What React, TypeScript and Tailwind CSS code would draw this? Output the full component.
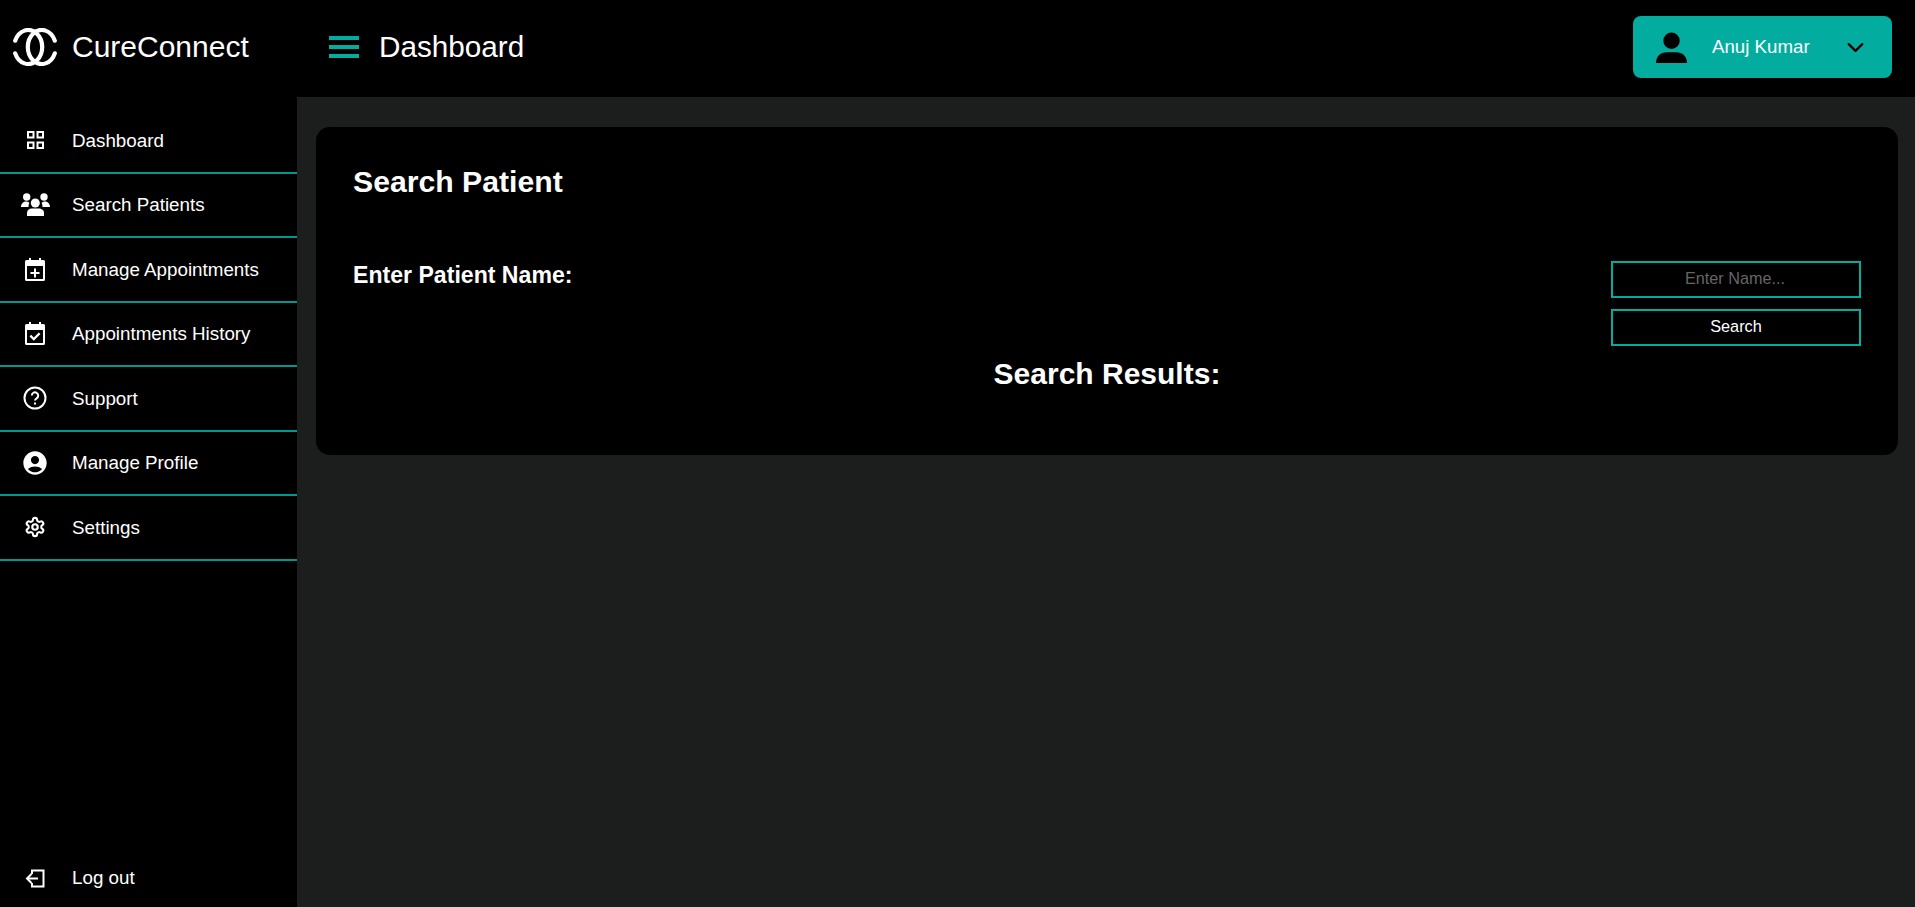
import { MdAccountCircle } from "react-icons/md";
import { LuChevronDown, LuSettings } from "react-icons/lu";
import type { ReactNode } from "react";

const Logo = () => (
  <svg width="44" height="38" viewBox="0 0 44 38" fill="none" stroke="#fff" strokeWidth="4.200" strokeLinecap="round">
    <path d="M2.200 12.700A14 17 0 1 1 2.200 25.300" />
    <path d="M41.800 12.700A14 17 0 1 0 41.800 25.300" />
  </svg>
);

const GridIcon = () => (
  <svg width="17" height="18" viewBox="0 0 17 18" fill="none" stroke="#fff" strokeWidth="2">
    <rect x="1" y="1" width="5.500" height="5.500" />
    <rect x="10.500" y="1" width="5.500" height="5.500" />
    <rect x="1" y="11.500" width="5.500" height="5.500" />
    <rect x="10.500" y="11.500" width="5.500" height="5.500" />
  </svg>
);

const UsersIcon = () => (
  <svg width="29" height="23" viewBox="0 0 29 23" fill="#fff">
    <circle cx="5.700" cy="4" r="3.700" />
    <circle cx="23" cy="4" r="3.700" />
    <circle cx="14.300" cy="10" r="4.500" />
    <path d="M6 23v-3c0-3 2-4.500 5-4.500h6.500c3 0 5.500 1.500 5.500 4.500v3z" />
    <path d="M0 14c0-3 2-5.500 5-5.500 1.500 0 2.500.5 3.500 1.500-.8 1-1 2.500-1 4z" />
    <path d="M29 14c0-3-2-5.500-5-5.500-1.500 0-2.500.5-3.500 1.500.8 1 1 2.500 1 4z" />
  </svg>
);

const CalPlus = () => (
  <svg width="20" height="23" viewBox="0 0 20 23" fill="#fff">
    <path fillRule="evenodd" d="M4 0h2v2h8V0h2v2h2.500A1.500 1.500 0 0 1 20 3.500v18a1.500 1.500 0 0 1-1.500 1.500h-17A1.500 1.500 0 0 1 0 21.500v-18A1.500 1.500 0 0 1 1.500 2H4V0zM2 8v13h16V8H2z" />
    <path d="M9 10.500h2V14h3.500v2H11v3.500H9V16H5.500v-2H9z" />
  </svg>
);

const CalCheck = () => (
  <svg width="20" height="23" viewBox="0 0 20 23" fill="#fff">
    <path fillRule="evenodd" d="M4 0h2v2h8V0h2v2h2.500A1.500 1.500 0 0 1 20 3.500v18a1.500 1.500 0 0 1-1.500 1.500h-17A1.500 1.500 0 0 1 0 21.500v-18A1.500 1.500 0 0 1 1.500 2H4V0zM2 8v13h16V8H2z" />
    <path d="M4.500 14.500l1.700-1.700 2.600 2.600 5-5 1.700 1.700-6.700 6.700z" />
  </svg>
);

const Help = () => (
  <svg width="24" height="24" viewBox="0 0 24 24" fill="none" stroke="#fff" strokeWidth="2">
    <circle cx="12" cy="12" r="10.500" />
    <path d="M8.800 9.500a3.200 3.200 0 1 1 4.800 2.800c-1 .6-1.600 1.200-1.600 2.200" />
    <path d="M12 16.500v2" />
  </svg>
);

const LogoutIcon = () => (
  <svg width="20" height="19" viewBox="0 0 20 19" fill="none" stroke="#fff" strokeWidth="2">
    <path d="M7 5V1.500h11.500v16H7V14" />
    <path d="M13 9.500H2" />
    <path d="M6.500 5 2 9.500 6.500 14" />
  </svg>
);

const items: { label: string; icon: ReactNode }[] = [
  { label: "Dashboard", icon: <GridIcon /> },
  { label: "Search Patients", icon: <UsersIcon /> },
  { label: "Manage Appointments", icon: <CalPlus /> },
  { label: "Appointments History", icon: <CalCheck /> },
  { label: "Support", icon: <Help /> },
  { label: "Manage Profile", icon: <MdAccountCircle size={28} color="#fff" /> },
  { label: "Settings", icon: <LuSettings size={22} color="#fff" strokeWidth={2.300} /> },
];

export default function App() {
  return (
    <div className="flex h-screen flex-col overflow-hidden bg-black font-['Liberation_Sans',Arial,sans-serif] text-white">
      <header className="flex h-[97px] shrink-0 items-center bg-black pb-[3px] pr-[23px]">
        <div className="flex w-[297px] items-center pl-[13px]">
          <Logo />
          <span className="ml-[15px] text-[30px] leading-none">CureConnect</span>
        </div>
        <div className="ml-[32px] flex flex-col gap-[5px]">
          <span className="h-[4px] w-[30px] bg-[#02ada0]" />
          <span className="h-[4px] w-[30px] bg-[#02ada0]" />
          <span className="h-[4px] w-[30px] bg-[#02ada0]" />
        </div>
        <h1 className="ml-[20px] text-[29.700px] font-normal leading-none">Dashboard</h1>
        <button className="ml-auto flex h-[62px] w-[259px] items-center rounded-lg bg-[#02ada0] pl-[23px]">
          <svg width="31" height="31" viewBox="0 0 32 32" fill="#000">
            <circle cx="16" cy="9" r="8.500" />
            <path d="M0 32c0-7 5-11 11-11h10c6 0 11 4 11 11z" />
          </svg>
          <span className="ml-[25px] text-[18.700px]">Anuj Kumar</span>
          <LuChevronDown size={27} color="#000" className="ml-[32px]" />
        </button>
      </header>
      <div className="flex min-h-0 flex-1">
        <aside className="flex w-[297px] shrink-0 flex-col justify-between bg-black pt-[12px]">
          <nav className="flex flex-col">
            {items.map((it) => (
              <a key={it.label} className="flex h-[64.500px] items-center border-b-2 border-[#02968c]">
                <span className="flex w-[70px] shrink-0 items-center justify-center">{it.icon}</span>
                <span className="pl-[2px] pt-[1px] text-[18.800px]">{it.label}</span>
              </a>
            ))}
          </nav>
          <a className="mb-[9px] flex h-[40px] items-center">
            <span className="flex w-[70px] shrink-0 items-center justify-center">
              <LogoutIcon />
            </span>
            <span className="pl-[2px] text-[18.800px]">Log out</span>
          </a>
        </aside>
        <main className="min-w-0 flex-1 bg-[#1c1e1e] pl-[19px] pr-[17px] pt-[30px]">
          <section className="h-[328px] rounded-[14px] bg-black px-[37px] pt-[37px]">
            <h2 className="text-[30.200px] font-bold leading-[36px]">Search Patient</h2>
            <div className="mt-[61px] flex items-start justify-between">
              <label className="text-[23.100px] font-bold leading-[28px]">Enter Patient Name:</label>
              <div className="flex w-[250px] flex-col gap-[11px]">
                <input
                  placeholder="Enter Name..."
                  className="h-[37px] w-full border-2 border-[#02ada0] bg-black pb-[2px] pr-[2px] text-center text-[16.200px] font-light text-white outline-none placeholder:text-[#666]"
                />
                <button className="h-[37px] w-full border-2 border-[#02ada0] bg-black pb-[2px] text-[16.300px] font-light text-white">
                  Search
                </button>
              </div>
            </div>
            <h3 className="mt-[10px] text-center text-[30px] font-bold leading-[36px]">Search Results:</h3>
          </section>
        </main>
      </div>
    </div>
  );
}
